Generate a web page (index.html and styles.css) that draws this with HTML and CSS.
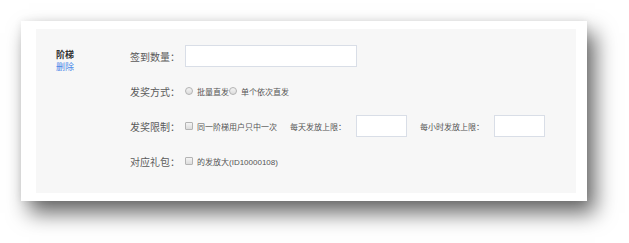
FILE: index.html
```html
<!DOCTYPE html>
<html lang="zh-CN">
<head>
    <meta charset="UTF-8">
    <meta name="viewport" content="width=device-width, initial-scale=1.0">
    <title>阶梯设置</title>
    <link rel="stylesheet" href="styles.css">
</head>
<body>
    <div class="frame">
        <div class="panel">
            <div class="step">
                <div class="step-name">阶梯</div>
                <a class="step-del" href="#">删除</a>
            </div>
            <form class="step-form">
                <div class="row">
                    <label class="row-label" for="signCount">签到数量：</label>
                    <input type="text" id="signCount" class="input-wide">
                </div>
                <div class="row">
                    <span class="row-label">发奖方式：</span>
                    <label class="opt"><input type="radio" name="mode" class="radio">批量直发</label>
                    <label class="opt"><input type="radio" name="mode" class="radio">单个依次直发</label>
                </div>
                <div class="row">
                    <span class="row-label">发奖限制：</span>
                    <label class="opt"><input type="checkbox" class="check">同一阶梯用户只中一次</label>
                    <span class="sub-label">每天发放上限：</span>
                    <input type="text" class="input-small">
                    <span class="sub-label">每小时发放上限：</span>
                    <input type="text" class="input-small">
                </div>
                <div class="row">
                    <span class="row-label">对应礼包：</span>
                    <label class="opt"><input type="checkbox" class="check">的发放大(ID10000108)</label>
                </div>
            </form>
        </div>
    </div>
</body>
</html>
```

FILE: styles.css
```css
body { margin: 0; padding: 21px 0 42px 21px; min-height: 243px; box-sizing: border-box; background: #fff; font-family: "Liberation Sans", "Noto Sans CJK SC", sans-serif; color: #555; }
.frame { width: 566px; height: 180px; box-sizing: border-box; padding: 8px 11px 8px 15px; background: #fff; box-shadow: 8px 12px 20px rgba(0, 0, 0, 0.6), 0 0 8px rgba(0, 0, 0, 0.07); }
.panel { display: flex; height: 164px; box-sizing: border-box; padding-top: 16px; background: #f7f7f7; }
.step { width: 94px; box-sizing: border-box; padding: 4px 0 0 20px; font-size: 9px; line-height: 12px; }
.step-name { color: #333; font-weight: bold; }
.step-del { display: block; color: #4a86e8; text-decoration: none; }
.step-form { display: flex; flex-direction: column; gap: 13px; }
.row { display: flex; align-items: center; height: 22px; font-size: 8px; }
.row-label { width: 55px; font-size: 10px; color: #5a5a5a; }
.opt { display: flex; align-items: center; color: #555; }
.sub-label { margin: 0 10px 0 13px; color: #555; }
.input-wide, .input-small { box-sizing: border-box; height: 22px; margin: 0; border: 1px solid #d9dee7; background: #fff; }
.input-wide { width: 172px; }
.input-small { width: 51px; }
.radio, .check { appearance: none; -webkit-appearance: none; width: 8px; height: 8px; margin: 0 4px 0 0; border: 1px solid #b4b4b4; background: linear-gradient(#f4f4f4, #dcdcdc); box-sizing: border-box; }
.radio { border-radius: 50%; }
.check { border-radius: 1px; }
```
